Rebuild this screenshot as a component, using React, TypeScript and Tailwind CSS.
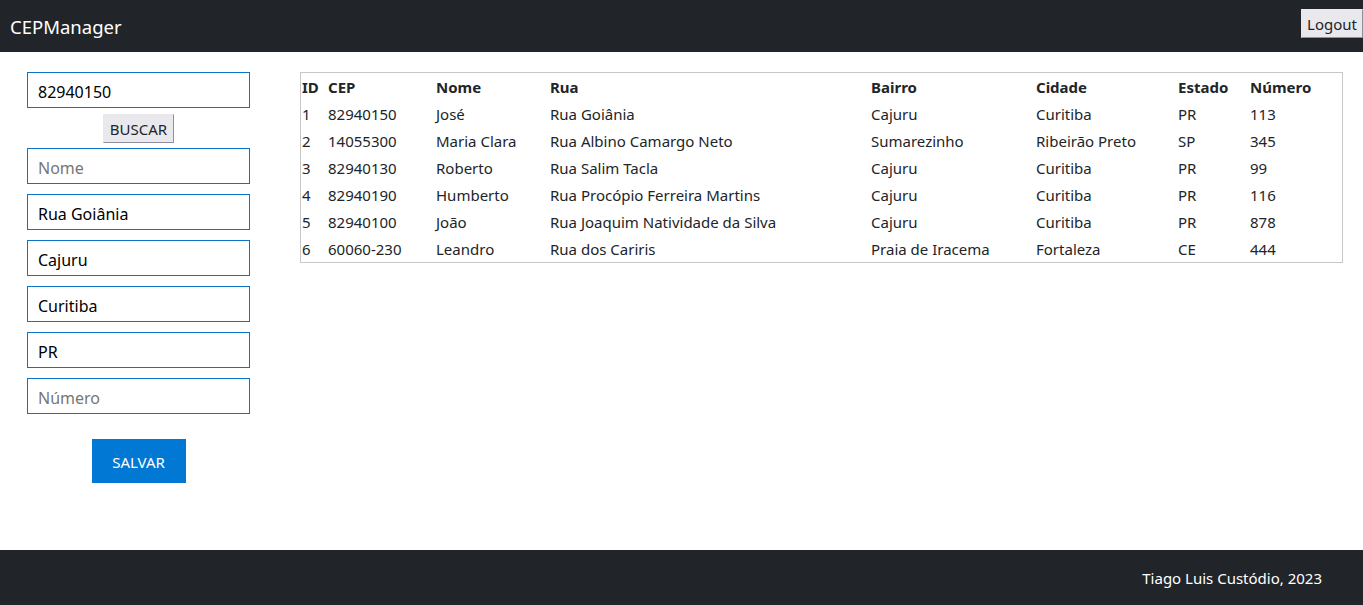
import React, { useState } from 'react'

type Endereco = { id: number; cep: string; nome: string; rua: string; bairro: string; cidade: string; estado: string; numero: string }

const enderecos: Endereco[] = [
  { id: 1, cep: '82940150', nome: 'José', rua: 'Rua Goiânia', bairro: 'Cajuru', cidade: 'Curitiba', estado: 'PR', numero: '113' },
  { id: 2, cep: '14055300', nome: 'Maria Clara', rua: 'Rua Albino Camargo Neto', bairro: 'Sumarezinho', cidade: 'Ribeirão Preto', estado: 'SP', numero: '345' },
  { id: 3, cep: '82940130', nome: 'Roberto', rua: 'Rua Salim Tacla', bairro: 'Cajuru', cidade: 'Curitiba', estado: 'PR', numero: '99' },
  { id: 4, cep: '82940190', nome: 'Humberto', rua: 'Rua Procópio Ferreira Martins', bairro: 'Cajuru', cidade: 'Curitiba', estado: 'PR', numero: '116' },
  { id: 5, cep: '82940100', nome: 'João', rua: 'Rua Joaquim Natividade da Silva', bairro: 'Cajuru', cidade: 'Curitiba', estado: 'PR', numero: '878' },
  { id: 6, cep: '60060-230', nome: 'Leandro', rua: 'Rua dos Cariris', bairro: 'Praia de Iracema', cidade: 'Fortaleza', estado: 'CE', numero: '444' },
]

const Campo = ({ value, placeholder, onChange }: { value: string; placeholder: string; onChange: (v: string) => void }) => (
  <input
    value={value}
    placeholder={placeholder}
    onChange={(e) => onChange(e.target.value)}
    className="w-[223px] h-9 border border-[#0b74c6] px-[10px] pt-[3px] text-[16px] text-black placeholder:text-[#767676] outline-none"
  />
)

const App = () => {
  const [cep, setcep] = useState('82940150')
  const [nome, setnome] = useState('')
  const [rua, setrua] = useState('Rua Goiânia')
  const [bairro, setbairro] = useState('Cajuru')
  const [cidade, setcidade] = useState('Curitiba')
  const [estado, setestado] = useState('PR')
  const [numero, setnumero] = useState('')

  return (
    <div className="flex flex-col w-full min-h-[605px] bg-white text-[#212529]" style={{ fontFamily: '"Noto Sans", "Open Sans", sans-serif' }}>
      <header className="h-[52px] bg-[#212529] flex items-center justify-between pl-[10px]">
        <span className="text-white text-[18.5px] pt-[1px]">CEPManager</span>
        <button className="self-start mt-[9px] h-[29px] w-[62px] pt-[2px] bg-[#e9e9ed] border border-[#e9e9ed] border-b-[#8f8f9d] border-r-[#8f8f9d] text-[15px] text-[#212529]">
          Logout
        </button>
      </header>

      <main className="h-[498px] flex items-start">
        <div className="w-[277px] shrink-0 flex flex-col items-center pl-[27px] pr-[27px] pt-5">
          <Campo value={cep} placeholder="CEP" onChange={setcep} />
          <button className="mt-[6px] h-[29px] w-[71px] pt-[2px] bg-[#e9e9ed] border border-[#e9e9ed] border-b-[#8f8f9d] border-r-[#8f8f9d] text-[15px] text-[#212529]">
            BUSCAR
          </button>
          <div className="mt-[5px] flex flex-col gap-[10px]">
            <Campo value={nome} placeholder="Nome" onChange={setnome} />
            <Campo value={rua} placeholder="Rua" onChange={setrua} />
            <Campo value={bairro} placeholder="Bairro" onChange={setbairro} />
            <Campo value={cidade} placeholder="Cidade" onChange={setcidade} />
            <Campo value={estado} placeholder="Estado" onChange={setestado} />
            <Campo value={numero} placeholder="Número" onChange={setnumero} />
          </div>
          <button className="mt-[25px] w-[94px] h-[44px] pt-[2px] bg-[#0078d4] text-white text-[15px]">SALVAR</button>
        </div>

        <div className="mt-5 ml-[23px] w-[1043px] border border-[#c8c8c8]">
          <table className="w-full table-fixed text-left text-[15px]">
            <colgroup>
              <col className="w-[26px]" />
              <col className="w-[108px]" />
              <col className="w-[114px]" />
              <col className="w-[321px]" />
              <col className="w-[165px]" />
              <col className="w-[142px]" />
              <col className="w-[72px]" />
              <col />
            </colgroup>
            <thead>
              <tr className="h-[27px]">
                {['ID', 'CEP', 'Nome', 'Rua', 'Bairro', 'Cidade', 'Estado', 'Número'].map((h) => (
                  <th key={h} className="pl-[1px] pt-[2px] font-bold whitespace-nowrap">{h}</th>
                ))}
              </tr>
            </thead>
            <tbody>
              {enderecos.map((e) => (
                <tr key={e.id} className="h-[27px] [&>td]:pl-[1px] [&>td]:pt-[2px] [&>td]:whitespace-nowrap">
                  <td>{e.id}</td>
                  <td>{e.cep}</td>
                  <td>{e.nome}</td>
                  <td>{e.rua}</td>
                  <td>{e.bairro}</td>
                  <td>{e.cidade}</td>
                  <td>{e.estado}</td>
                  <td>{e.numero}</td>
                </tr>
              ))}
            </tbody>
          </table>
        </div>
      </main>

      <footer className="h-[55px] bg-[#212529] flex items-center justify-end pr-[41px]">
        <span className="text-white text-[15px] pt-[1px]">Tiago Luis Custódio, 2023</span>
      </footer>
    </div>
  )
}

export default App
